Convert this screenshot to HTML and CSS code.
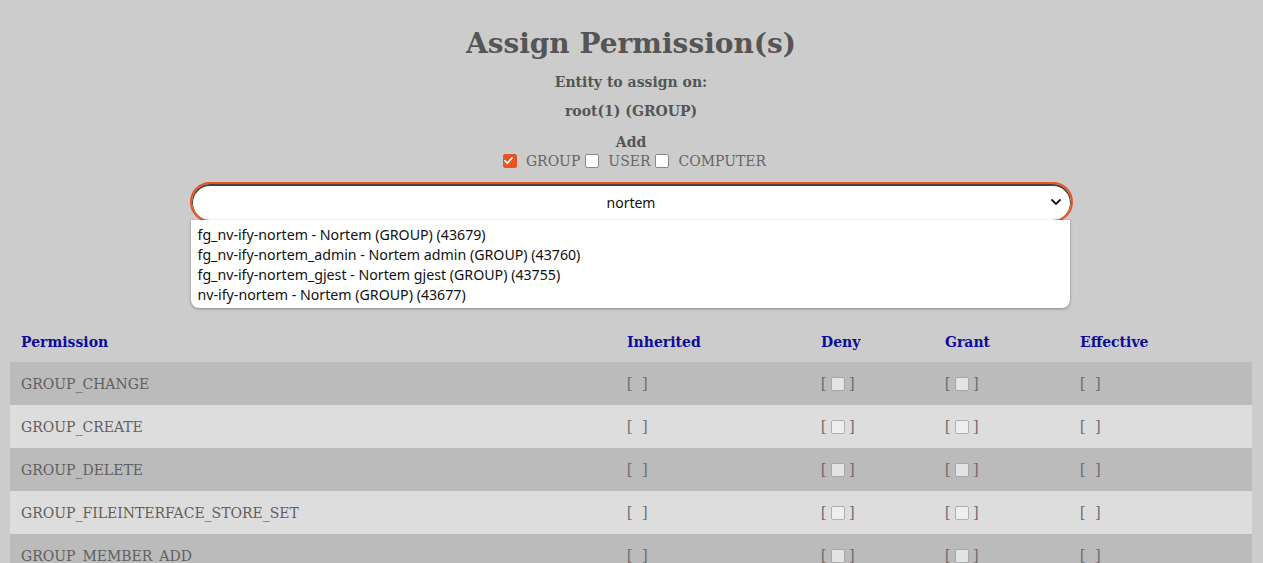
FILE: index.html
```html
<!DOCTYPE html>
<html lang="en">
<head>
<meta charset="utf-8">
<title>Assign Permission(s)</title>
<link rel="stylesheet" href="styles.css">
</head>
<body>
<div class="page">
  <h1 class="title">Assign Permission(s)</h1>
  <p class="entity-label">Entity to assign on:</p>
  <p class="entity-name">root(1) (GROUP)</p>
  <div class="add-block">
    <div class="add-label">Add</div>
    <div class="types">
      <span class="cb checked"><svg viewBox="0 0 13 13" width="13" height="13"><path d="M3 6.8 L5.4 9.2 L10 4" fill="none" stroke="#fff" stroke-width="1.8" stroke-linecap="round" stroke-linejoin="round"/></svg></span>
      <span class="type-label">GROUP</span>
      <span class="cb"></span>
      <span class="type-label">USER</span>
      <span class="cb"></span>
      <span class="type-label last">COMPUTER</span>
    </div>
  </div>
  <div class="search-wrap">
    <div class="search">
      <span class="search-text">nortem</span>
      <svg class="chevron" viewBox="0 0 12 8" width="12" height="8"><path d="M1.5 1.5 L6 6 L10.5 1.5" fill="none" stroke="#111" stroke-width="1.8"/></svg>
    </div>
    <ul class="suggestions">
      <li>fg_nv-ify-nortem - Nortem (GROUP) (43679)</li>
      <li>fg_nv-ify-nortem_admin - Nortem admin (GROUP) (43760)</li>
      <li>fg_nv-ify-nortem_gjest - Nortem gjest (GROUP) (43755)</li>
      <li>nv-ify-nortem - Nortem (GROUP) (43677)</li>
    </ul>
  </div>
  <table class="perm-table">
    <colgroup>
      <col class="c-perm"><col class="c-inh"><col class="c-deny"><col class="c-grant"><col class="c-eff">
    </colgroup>
    <thead>
      <tr><th>Permission</th><th>Inherited</th><th>Deny</th><th>Grant</th><th>Effective</th></tr>
    </thead>
    <tbody>
      <tr><td>GROUP_CHANGE</td><td class="br">[<span class="gap"></span>]</td><td class="br">[<span class="mini-cb"></span>]</td><td class="br">[<span class="mini-cb"></span>]</td><td class="br">[<span class="gap"></span>]</td></tr>
      <tr><td>GROUP_CREATE</td><td class="br">[<span class="gap"></span>]</td><td class="br">[<span class="mini-cb"></span>]</td><td class="br">[<span class="mini-cb"></span>]</td><td class="br">[<span class="gap"></span>]</td></tr>
      <tr><td>GROUP_DELETE</td><td class="br">[<span class="gap"></span>]</td><td class="br">[<span class="mini-cb"></span>]</td><td class="br">[<span class="mini-cb"></span>]</td><td class="br">[<span class="gap"></span>]</td></tr>
      <tr><td>GROUP_FILEINTERFACE_STORE_SET</td><td class="br">[<span class="gap"></span>]</td><td class="br">[<span class="mini-cb"></span>]</td><td class="br">[<span class="mini-cb"></span>]</td><td class="br">[<span class="gap"></span>]</td></tr>
      <tr><td>GROUP_MEMBER_ADD</td><td class="br">[<span class="gap"></span>]</td><td class="br">[<span class="mini-cb"></span>]</td><td class="br">[<span class="mini-cb"></span>]</td><td class="br">[<span class="gap"></span>]</td></tr>
    </tbody>
  </table>
</div>
</body>
</html>
```

FILE: styles.css
```css
html, body {
  margin: 0;
  padding: 0;
  background: #cccccc;
}
body {
  font-family: "DejaVu Serif", serif;
  color: #555555;
}
.page {
  padding: 10px 11px 0 10px;
  display: flex;
  flex-direction: column;
  align-items: center;
}
.title {
  margin: 14px 0 0;
  font-size: 28px;
  line-height: 40px;
  font-weight: bold;
  color: #555555;
}
.entity-label,
.entity-name {
  margin: 0;
  font-size: 14px;
  font-weight: bold;
  line-height: 20px;
}
.entity-label { margin-top: 8px; }
.entity-name { margin-top: 9px; }
.add-block {
  margin-top: 12px;
  display: flex;
  flex-direction: column;
  align-items: center;
}
.add-label {
  font-size: 14px;
  font-weight: bold;
  line-height: 18px;
}
.types {
  display: flex;
  align-items: center;
  font-size: 14px;
  line-height: 20px;
  margin-left: 6px;
}
.cb {
  display: inline-block;
  box-sizing: border-box;
  width: 14px;
  height: 14px;
  border: 1.5px solid #8a8690;
  border-radius: 2px;
  background: #fff;
  margin: 0 4px 0 1px;
}
.cb.checked {
  background: #e95420;
  border-color: #e95420;
  position: relative;
}
.cb.checked svg {
  position: absolute;
  left: -1.5px;
  top: -1.5px;
}
.type-label {
  margin: 0 4px 0 5px;
  color: #666;
}
.type-label.last { margin-right: 0; }
.search-wrap {
  position: relative;
  margin-top: 11px;
  width: 883px;
  height: 40px;
  margin-bottom: 101px;
}
.search {
  box-sizing: border-box;
  height: 40px;
  border: 2px solid #e95420;
  border-radius: 20px;
  background: #fff;
  box-shadow: inset 0 1px 0 1px #444;
  display: flex;
  align-items: center;
  justify-content: center;
  position: relative;
  font-family: "Noto Sans", sans-serif;
  font-size: 14px;
  color: #111;
}
.chevron {
  position: absolute;
  right: 9px;
  top: 14px;
}
.suggestions {
  position: absolute;
  left: 1px;
  top: 38px;
  width: 879px;
  margin: 0;
  padding: 5px 0 3px;
  list-style: none;
  background: #fff;
  border-radius: 0 0 8px 8px;
  box-shadow: 0 1px 3px rgba(0,0,0,0.35);
  font-family: "Noto Sans", sans-serif;
  font-size: 14.2px;
  color: #111;
}
.suggestions li {
  padding: 0 7px;
  line-height: 20px;
  white-space: nowrap;
}
.perm-table {
  width: 1242px;
  border-collapse: collapse;
  align-self: flex-start;
  font-size: 14px;
}
.c-perm { width: 606px; }
.c-inh { width: 194px; }
.c-deny { width: 124px; }
.c-grant { width: 135px; }
.c-eff { width: 183px; }
.perm-table th {
  text-align: left;
  color: #0c0c99;
  font-weight: bold;
  height: 38px;
  padding: 0 11px 1px;
}
.perm-table td {
  height: 43px;
  padding: 0 11px;
  color: #606060;
}
.perm-table tbody tr:nth-child(odd) td { background: #bbbbbb; }
.perm-table tbody tr:nth-child(even) td { background: #dddddd; }
.perm-table td.br {
  font-family: "Liberation Serif", serif;
  font-size: 16px;
  color: #666666;
  white-space: nowrap;
}
.gap {
  display: inline-block;
  width: 10px;
}
.mini-cb {
  display: inline-block;
  box-sizing: border-box;
  width: 14px;
  height: 14px;
  border: 1.5px solid #a8a8a8;
  border-radius: 2px;
  background: #e3e3e3;
  vertical-align: -2px;
  margin: 0 4px 0 5px;
}
.perm-table tbody tr:nth-child(even) .mini-cb { background: #eeeeee; border-color: #b0b0b0; }
```
